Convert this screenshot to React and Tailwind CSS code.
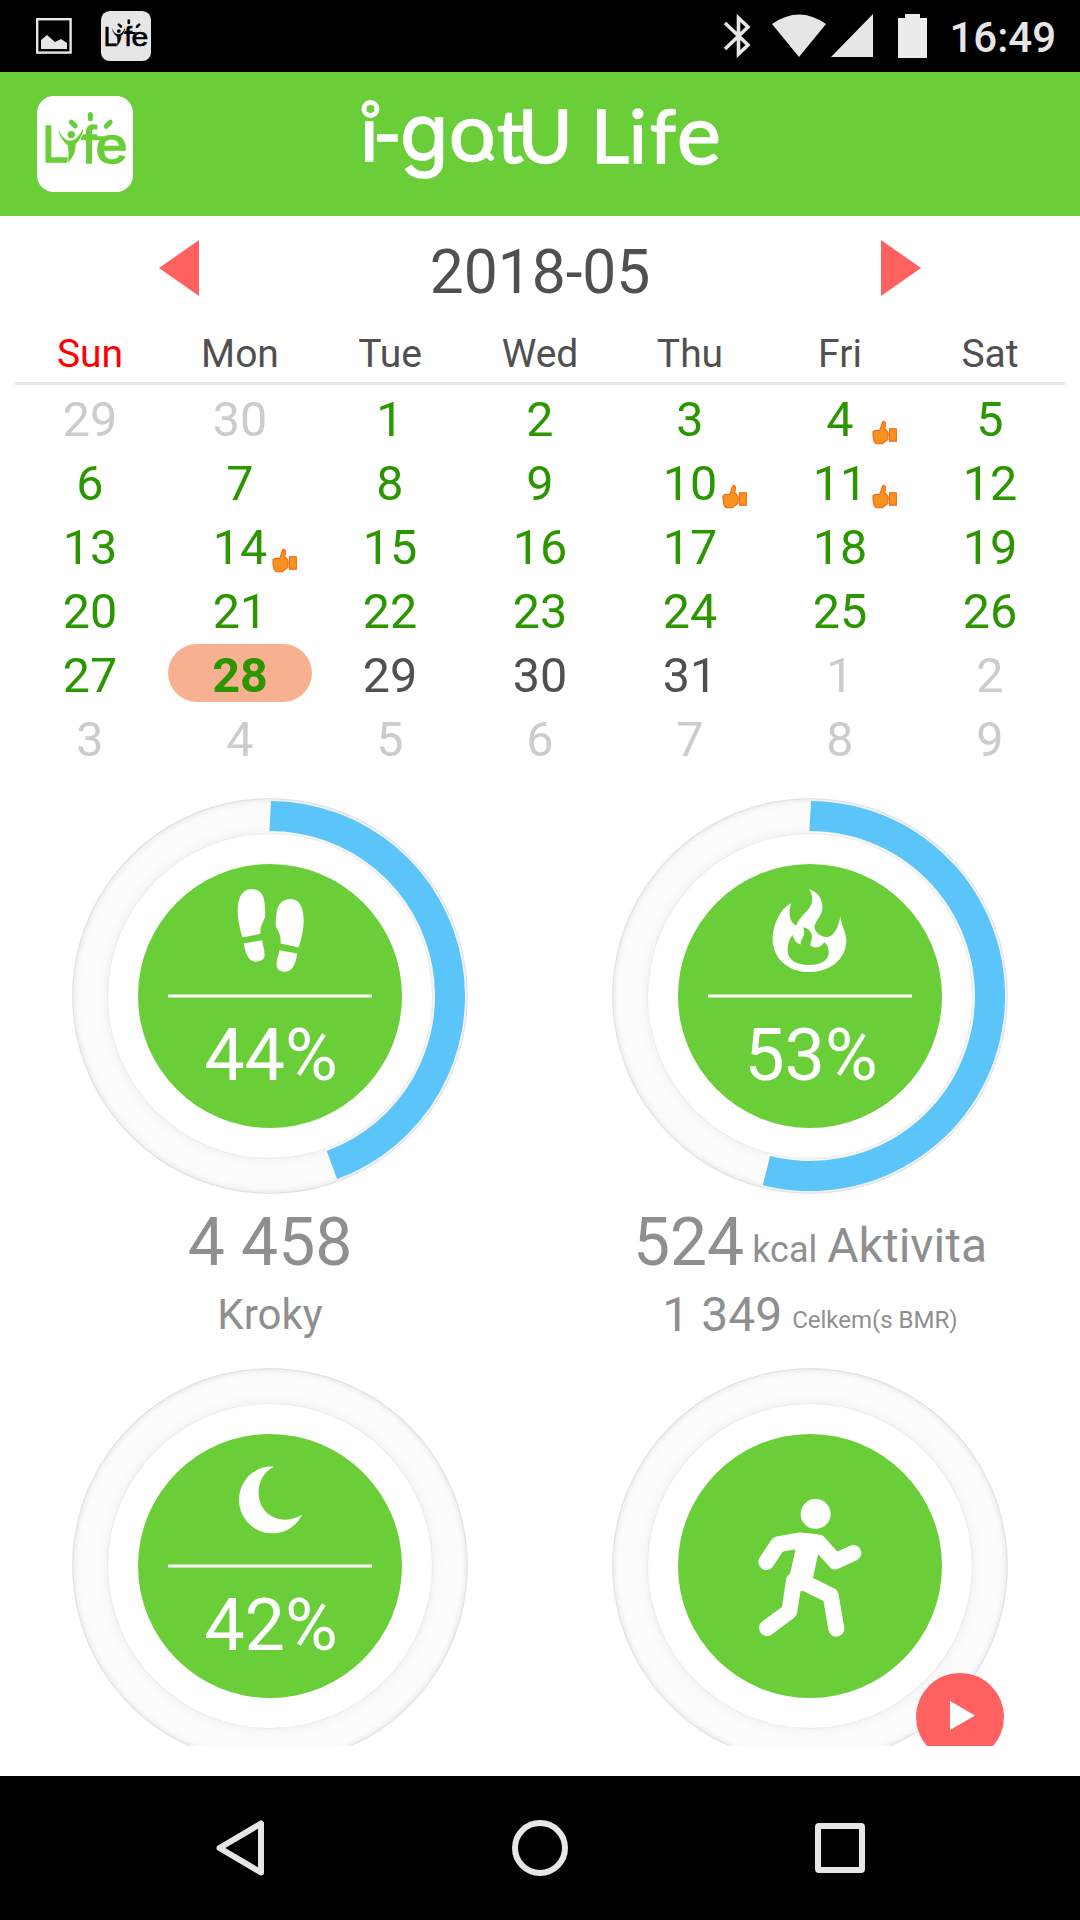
import clsx from "clsx";

const weekdays = ["Sun", "Mon", "Tue", "Wed", "Thu", "Fri", "Sat"];

// type: out = other month, past = green, future = dark
const days = [
  ...[29, 30].map((day) => ({ day, type: "out" })),
  ...Array.from({ length: 28 }, (_, i) => ({ day: i + 1, type: "past" })),
  ...[29, 30, 31].map((day) => ({ day, type: "future" })),
  ...Array.from({ length: 9 }, (_, i) => ({ day: i + 1, type: "out" })),
];

const goalDays = [4, 10, 11, 14];
const today = 28;

function LifeBadge({ className, tile, ink }) {
  return (
    <svg viewBox="112 288 286 286" className={className}>
      <rect x="112" y="288" width="286" height="286" rx="50" fill={tile} />
      <g fill={ink} stroke={ink} strokeWidth="4" fontFamily="'Liberation Sans', sans-serif">
        <text x="128" y="486" fontSize="153" textLength="80" lengthAdjust="spacingAndGlyphs">L</text>
        <text x="247" y="487" fontSize="153">f</text>
        <text x="286" y="488" fontSize="152" textLength="96" lengthAdjust="spacingAndGlyphs">e</text>
      </g>
      <path d="M243 408H312L303 420H243Z" fill={ink} />
      {/* person with raised arms */}
      <path
        d="M174 388L179 392C184 404 190 412 200 418C210 422 222 420 230 412C238 404 242 396 247 386L251 390C246 408 238 422 228 432C228 456 220 474 202 489C206 474 206 450 202 434C188 424 178 408 174 388Z"
        fill={ink}
        stroke={tile}
        strokeWidth="2"
      />
      <circle cx="214" cy="403" r="11" fill={ink} />
      <path d="M214 366L226 377M271 343V356M330 366L318 378" stroke={ink} strokeWidth="15" strokeLinecap="round" />
    </svg>
  );
}

function StatusBar() {
  return (
    <div className="flex h-[72px] items-center bg-black pr-6 pl-9">
      <svg viewBox="0 0 36 36" className="size-9 text-[#e6e6e6]">
        <rect x="1.2" y="1.2" width="33.4" height="33.4" fill="none" stroke="currentColor" strokeWidth="2.4" />
        <path d="M5 31V22L11 17L19 24L25 21L31 25V31Z" fill="currentColor" />
      </svg>
      <LifeBadge className="ml-[29px] size-[50px]" tile="#e6e6e6" ink="#000" />
      <div className="ml-auto flex items-center text-[#e6e6e6]">
        <svg viewBox="0 0 28 44" className="mr-[21px] h-11 w-7">
          <path d="M2 9L25 31L15.500 40V4L25 13L2 35" fill="none" stroke="currentColor" strokeWidth="3.600" />
        </svg>
        <svg viewBox="0 0 54 43" className="mr-[5px] h-[43px] w-[54px]">
          <path d="M0 10Q27 -9 54 10L27 43Z" fill="currentColor" />
        </svg>
        <svg viewBox="0 0 42 43" className="mr-[25px] h-[43px] w-[42px]">
          <path d="M42 0V43H0Z" fill="currentColor" />
        </svg>
        <svg viewBox="0 0 29 44" className="mr-[22px] h-11 w-[29px]">
          <path d="M7 0H22V4H29V44H0V4H7Z" fill="#ececec" />
        </svg>
        <span className="pt-[5px] text-[42px] leading-none font-medium">16:49</span>
      </div>
    </div>
  );
}

function Header() {
  return (
    <header className="grid h-36 grid-cols-[96px_1fr_96px] items-center bg-[#69ce37] px-[37px]">
      <LifeBadge className="size-24" tile="#fff" ink="#69ce37" />
      <svg
        viewBox="340 84 400 120"
        className="h-[120px] w-[400px] justify-self-center overflow-visible"
        fontFamily="Lato, sans-serif"
        fill="#fff"
        stroke="#fff"
      >
        <text y="161" fontSize="77" strokeWidth="1.6">
          <tspan x="360 373">i-</tspan>
          <tspan x="400" fontFamily="Inter, sans-serif" fontSize="79">g</tspan>
          <tspan x="449" fontSize="82">o</tspan>
          <tspan x="497 518" y="163" fontSize="74">tU</tspan>
          <tspan x="591 629 650" y="163" fontSize="74">Lif</tspan>
          <tspan x="677" y="164" fontSize="83">e</tspan>
        </text>
        <circle cx="370.500" cy="109" r="6.500" fill="#69ce37" strokeWidth="5" />
        <path d="M486 153L491 158" strokeWidth="6" strokeLinecap="round" />
      </svg>
    </header>
  );
}

function ThumbUp({ className }) {
  return (
    <svg viewBox="0 0 74 74" className={className} fill="#f7931e" stroke="#ff5a0a" strokeWidth="3">
      <path d="M34 3L40 9L38 27C45 31 48 36 48 42L47 58C40 62 37 66 31 70L13 70C8 68 5 62 5 56L3 48L3 34L9 31L22 31C29 24 26 10 34 3Z" />
      <rect x="52" y="26" width="20" height="37" />
    </svg>
  );
}

function Calendar() {
  return (
    <section className="px-[15px]">
      <div className="flex h-[111px] items-center justify-between px-36">
        <svg viewBox="0 0 40 56" className="mb-[7px] h-14 w-10">
          <path d="M40 0V56L0 28Z" fill="#ff6161" />
        </svg>
        <h1 className="pt-[3px] text-[60.5px] leading-none text-[#505050]">2018-05</h1>
        <svg viewBox="0 0 40 56" className="mb-[7px] h-14 w-10">
          <path d="M0 0V56L40 28Z" fill="#ff6161" />
        </svg>
      </div>
      <div className="grid h-[58px] grid-cols-7 border-b-[3px] border-[#e5e5e5] text-center text-[39px] leading-[54px] text-[#505050]">
        {weekdays.map((name) => (
          <span key={name} className={clsx(name === "Sun" && "text-[#ff0000]")}>
            {name}
          </span>
        ))}
      </div>
      <div className="grid grid-cols-7">
        {days.map(({ day, type }, index) => {
          const current = type === "past";
          const isToday = current && day === today;
          return (
            <div key={index} className="relative flex h-16 items-center justify-center">
              <span
                className={clsx(
                  "h-[58px] w-36 rounded-full pt-[3px] text-center text-[48.5px] leading-[58px]",
                  type === "out" && "text-[#cccccc]",
                  type === "past" && "text-[#2b9600]",
                  type === "future" && "text-[#505050]",
                  isToday && "bg-[#f8b190] font-bold"
                )}
              >
                {day}
              </span>
              {current && goalDays.includes(day) && (
                <ThumbUp className="absolute right-[18px] bottom-1 size-[25px]" />
              )}
            </div>
          );
        })}
      </div>
    </section>
  );
}

function arcPath(from, to) {
  const point = (r, deg) => {
    const a = (deg * Math.PI) / 180;
    return `${198 + r * Math.sin(a)} ${198 - r * Math.cos(a)}`;
  };
  const large = to - from > 180 ? 1 : 0;
  return `M${point(195, from)}A195 195 0 ${large} 1 ${point(195, to)}L${point(165, to)}A165 165 0 ${large} 0 ${point(165, from - 0.5)}Z`;
}

function Dial({ sweep, children }) {
  return (
    <div className="relative flex size-[396px] items-center justify-center">
      <svg viewBox="0 0 396 396" className="absolute inset-0 size-full">
        <defs>
          <radialGradient id="band" gradientUnits="userSpaceOnUse" cx="198" cy="198" r="198">
            <stop offset="0.815" stopColor="#e0e0e0" />
            <stop offset="0.824" stopColor="#f4f4f4" />
            <stop offset="0.85" stopColor="#fafafa" />
            <stop offset="0.88" stopColor="#fcfcfc" />
            <stop offset="0.95" stopColor="#fcfcfc" />
            <stop offset="0.97" stopColor="#fafafa" />
            <stop offset="0.99" stopColor="#f1f1f1" />
            <stop offset="1" stopColor="#d6d6d6" />
          </radialGradient>
        </defs>
        <circle cx="198" cy="198" r="197.700" fill="url(#band)" />
        <circle cx="198" cy="198" r="162" fill="#fff" />
        {sweep && <path d={arcPath(0.3, sweep)} fill="#5bc5fa" />}
      </svg>
      <div className="relative flex size-[264px] flex-col items-center rounded-full bg-[#69ce37] text-white">{children}</div>
    </div>
  );
}

function DialContent({ icon, value }) {
  return (
    <>
      <div className="flex h-[130px] w-full justify-center pt-[25px]">{icon}</div>
      <div className="h-1 w-[204px] border-y border-[#b9e8a0] bg-white" />
      <span className="mt-[22px] pl-[2px] text-[72px] leading-[72px]">{value}</span>
    </>
  );
}

function FootprintsIcon() {
  return (
    <svg viewBox="530 326 200 248" className="h-[83px] w-[67px]" fill="currentColor">
      <path d="M572 326C545 326 531 355 532 392C532 420 540 450 546 471L600 460C598 436 610 424 614 408C615 395 613 380 612 364C609 340 596 326 572 326Z" />
      <path d="M550 489L605 479C607 495 614 512 612 528C609 540 597 543 585 543C564 543 554 515 550 489Z" />
      <path d="M690 356C663 356 649 376 648 402C646 418 643 430 648 442C655 456 662 464 660 489L714 501C722 475 729 450 729 420C729 384 718 356 690 356Z" />
      <path d="M656 509L710 519C706 545 698 573 674 573C658 573 648 566 648 552C648 536 655 525 656 509Z" />
    </svg>
  );
}

function FlameIcon() {
  return (
    <svg viewBox="518 326 224 250" className="mr-[1px] h-[83px] w-[75px]" fill="currentColor" fillRule="evenodd">
      <path d="M627 326C655 335 670 355 669 382C668 410 645 422 645 444C650 460 667 471 685 471C705 467 718 438 723 408C727 440 741 455 741 485C738 540 690 576 630 576C560 576 519 530 519 477C520 430 545 382 575 369C566 395 568 425 590 437C600 405 638 390 638 358C638 344 635 332 627 326ZM579 464C583 480 590 490 604 493C600 475 622 470 611 441C630 443 640 462 637 475C636 485 630 490 634 498C650 507 668 500 674 486C684 495 688 505 688 518C686 545 660 555 627 555C590 555 564 540 564 510C564 490 570 475 579 464Z" />
    </svg>
  );
}

function MoonIcon() {
  return (
    <svg viewBox="535 319 190 203" className="mt-[7px] h-[68px] w-[63px]" fill="currentColor">
      <path d="M641 320C612 333 594 362 594 398C594 445 628 480 675 480C692 480 710 474 725 465C708 500 675 521 636 521C580 521 535 477 535 420C535 360 585 314 641 320Z" />
    </svg>
  );
}

function RunnerIcon() {
  return (
    <svg viewBox="474 415 312 414" className="mt-[65px] h-[138px] w-[104px]" fill="currentColor">
      <circle cx="647" cy="460" r="45" />
      <path
        d="M499 604L534 551L601 539L655 545L706 602L760 577M582 660L568 752L501 802M615 667L692 705L709 804"
        fill="none"
        stroke="currentColor"
        strokeWidth="48"
        strokeLinecap="round"
        strokeLinejoin="round"
      />
      <path d="M588 560L655 560L654 582L638 655L606 692L558 672L570 640Z" />
    </svg>
  );
}

function Dashboard() {
  return (
    <section className="mt-[29px] grid h-[949px] grid-cols-2 content-start justify-items-center overflow-hidden text-[#8f8f8f]">
      <div className="flex h-[570px] flex-col items-center">
        <Dial sweep={159.9}>
          <DialContent icon={<FootprintsIcon />} value="44%" />
        </Dial>
        <p className="mt-[15px] text-[66px] leading-[68px]">4 458</p>
        <p className="mt-[13px] text-[42px] leading-[50px]">Kroky</p>
      </div>
      <div className="flex h-[570px] flex-col items-center">
        <Dial sweep={194}>
          <DialContent icon={<FlameIcon />} value="53%" />
        </Dial>
        <p className="mt-[15px] flex items-baseline text-[66px] leading-[68px]">
          524
          <span className="relative -top-[3px] ml-[8px] text-[36px] leading-none">kcal</span>
          <span className="relative -top-[3px] ml-[10px] text-[48px] leading-none">Aktivita</span>
        </p>
        <p className="mt-[13px] flex items-baseline text-[48px] leading-[50px]">
          1 349
          <span className="relative -top-[3px] ml-[10px] text-[24px] leading-none">Celkem(s BMR)</span>
        </p>
      </div>
      <Dial>
        <DialContent icon={<MoonIcon />} value="42%" />
      </Dial>
      <div className="relative">
        <Dial>
          <RunnerIcon />
        </Dial>
        <button className="absolute top-[305px] left-[304px] flex size-[88px] items-center justify-center rounded-full bg-[#ff6161]">
          <svg viewBox="0 0 25 29" className="mb-[2px] ml-[5px] h-[29px] w-[25px]">
            <path d="M0 0L25 14.500L0 29Z" fill="#fff" />
          </svg>
        </button>
      </div>
    </section>
  );
}

function NavBar() {
  return (
    <nav className="flex h-36 items-center justify-between bg-black pr-[215px] pl-[216px] text-[#e6e6e6]">
      <svg viewBox="0 0 48 56" className="h-14 w-12" fill="none" stroke="currentColor" strokeWidth="6" strokeLinejoin="round">
        <path d="M45 3.500V52.500L3.500 28Z" />
      </svg>
      <span className="size-14 rounded-full border-6 border-current" />
      <span className="size-[50px] rounded-[4px] border-6 border-current" />
    </nav>
  );
}

export default function App() {
  return (
    <main className="flex h-[1920px] w-[1080px] flex-col overflow-hidden bg-white font-[Roboto,sans-serif]">
      <StatusBar />
      <Header />
      <Calendar />
      <Dashboard />
      <div className="h-[30px]" />
      <NavBar />
    </main>
  );
}
